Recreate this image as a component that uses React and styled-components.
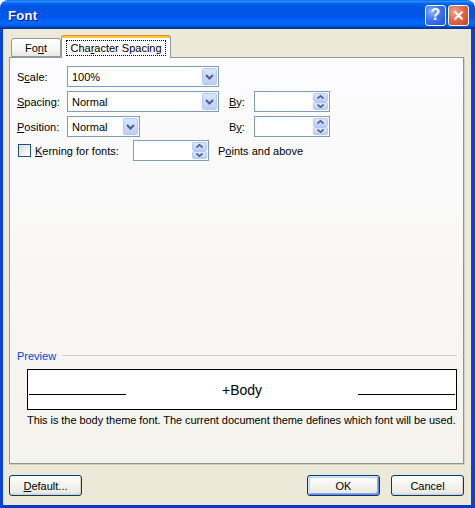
import styled, { createGlobalStyle } from "styled-components";

const GlobalStyle = createGlobalStyle`
  html, body {
    margin: 0;
    padding: 0;
    background: #ffffff;
  }
  body {
    font-family: "Liberation Sans", Arial, sans-serif;
    font-size: 11px;
    color: #000000;
  }
  * {
    box-sizing: border-box;
  }
`;

const Window = styled.div`
  width: 475px;
  height: 508px;
  display: flex;
  flex-direction: column;
  border-radius: 8px 8px 0 0;
  overflow: hidden;
`;

const TitleBar = styled.div`
  height: 29px;
  flex: none;
  display: flex;
  align-items: center;
  gap: 2px;
  padding: 1px 6px 0 8px;
  background: linear-gradient(
    to bottom,
    #0058ee 0%,
    #3593ff 4%,
    #288eff 6%,
    #127dff 8%,
    #036ffc 10%,
    #0262ee 14%,
    #0057e5 20%,
    #0054e3 24%,
    #0055eb 56%,
    #005bf5 66%,
    #026afe 76%,
    #0062ef 86%,
    #0052d6 92%,
    #0040ab 94%,
    #003092 100%
  );
`;

const Title = styled.div`
  flex: 1;
  color: #ffffff;
  font-weight: bold;
  font-size: 13px;
  letter-spacing: 0.3px;
  text-shadow: 1px 1px #0f1089;
`;

const CaptionButton = styled.div`
  width: 21px;
  height: 21px;
  border: 1px solid #ffffff;
  border-radius: 3px;
  display: flex;
  align-items: center;
  justify-content: center;
  color: #ffffff;
  font-weight: bold;
  font-size: 16px;
  background: ${(p) =>
    p.$close
      ? "radial-gradient(circle at 30% 30%, #f0a58c 0%, #e2694a 45%, #c8401b 100%)"
      : "radial-gradient(circle at 30% 30%, #8fb3fb 0%, #3a74f2 45%, #2250d7 100%)"};
`;

const Frame = styled.div`
  flex: 1;
  display: flex;
  flex-direction: column;
  background: #ece9d8;
  border-left: 3px solid #0842d9;
  border-right: 4px solid #0842d9;
  border-bottom: 3px solid #0838c8;
  padding: 6px 7px 9px 6px;
`;

const TabRow = styled.div`
  display: flex;
  align-items: flex-end;
  height: 22px;
  padding-left: 2px;
  position: relative;
  z-index: 1;
`;

const Tab = styled.div`
  width: ${(p) => p.$width}px;
  height: ${(p) => (p.$active ? 23 : 19)}px;
  margin-bottom: ${(p) => (p.$active ? -1 : 0)}px;
  border: 1px solid #919b9c;
  border-bottom: ${(p) => (p.$active ? "none" : "1px solid #919b9c")};
  border-top: ${(p) => (p.$active ? "1px solid #e68b2c" : "1px solid #919b9c")};
  border-radius: 3px 3px 0 0;
  display: flex;
  align-items: center;
  justify-content: center;
  padding-top: ${(p) => (p.$active ? 2 : 1)}px;
  background: ${(p) =>
    p.$active
      ? "linear-gradient(to bottom, #ffc73c 0, #ffc73c 2px, #fcfcfe 2px, #fcfcfe 100%)"
      : "linear-gradient(to bottom, #ffffff, #f3f3ef 70%, #e9e8e2)"};
`;

const FocusLabel = styled.span`
  outline: 1px dotted #000000;
  outline-offset: 1px;
  padding: 0 2px;
  line-height: 12px;
`;

const Panel = styled.div`
  flex: 1;
  display: flex;
  flex-direction: column;
  border: 1px solid #919b9c;
  border-right-color: #8c9495;
  border-bottom-color: #8c9495;
  background: linear-gradient(to bottom, #fcfcfe, #f4f3ee);
  box-shadow: 1px 1px 0 #d0cebf;
  padding: 8px 6px 36px 7px;
`;

const Grid = styled.div`
  display: grid;
  grid-template-columns: 50px 152px 35px 76px;
  grid-auto-rows: 21px;
  row-gap: 4px;
  align-items: center;
`;

const Label = styled.span`
  white-space: nowrap;
  padding-left: ${(p) => p.$indent || 0}px;
`;

const Field = styled.div`
  height: 21px;
  width: ${(p) => p.$width}px;
  border: 1px solid #7f9db9;
  background: #ffffff;
  display: flex;
  align-items: center;
  padding: 1px;
`;

const FieldValue = styled.span`
  flex: 1;
  padding-left: 3px;
`;

const DropButton = styled.div`
  width: 15px;
  height: 17px;
  border: 1px solid #b4c8f6;
  border-radius: 2px;
  background: linear-gradient(to bottom, #dbe6fe, #bccffb);
  display: flex;
  align-items: center;
  justify-content: center;
`;

const SpinStack = styled.div`
  width: 15px;
  height: 17px;
  display: flex;
  flex-direction: column;
`;

const SpinButton = styled.div`
  flex: 1;
  border: 1px solid #b4c8f6;
  border-radius: 2px;
  background: linear-gradient(to bottom, #dbe6fe, #bccffb);
  display: flex;
  align-items: center;
  justify-content: center;
`;

const KerningRow = styled.div`
  display: flex;
  align-items: center;
  height: 21px;
  margin-top: 3px;
`;

const CheckBox = styled.div`
  width: 13px;
  height: 13px;
  margin-left: 1px;
  border: 1px solid #1c5180;
  background: linear-gradient(135deg, #dcdcd7, #ffffff);
`;

const KerningLabel = styled.span`
  width: 98px;
  margin-left: 4px;
  white-space: nowrap;
`;

const AfterText = styled.span`
  margin-left: 9px;
`;

const PreviewSection = styled.div`
  margin-top: auto;
  display: flex;
  flex-direction: column;
`;

const PreviewHeader = styled.div`
  display: flex;
  align-items: center;
  gap: 6px;
  height: 13px;
  color: #0046d5;
`;

const Rule = styled.div`
  flex: 1;
  height: 1px;
  background: #d0d0bf;
`;

const PreviewBox = styled.div`
  margin: 7px 0 0 10px;
  height: 41px;
  border: 1px solid #000000;
  background: #ffffff;
  display: flex;
  align-items: flex-start;
  padding: 0 1px;
`;

const BaseLine = styled.div`
  width: 97px;
  height: 1px;
  background: #000000;
  margin-top: 24px;
`;

const PreviewText = styled.div`
  flex: 1;
  text-align: center;
  font-size: 14px;
  line-height: 16px;
  margin-top: 12px;
`;

const Description = styled.div`
  margin: 4px 0 0 10px;
  line-height: 13px;
  letter-spacing: -0.06px;
  white-space: nowrap;
`;

const ButtonRow = styled.div`
  display: flex;
  gap: 11px;
  margin-top: 11px;
`;

const Button = styled.div`
  width: 73px;
  height: 21px;
  border: 1px solid #003c74;
  border-radius: 3px;
  display: flex;
  align-items: center;
  justify-content: center;
  margin-right: ${(p) => (p.$push ? "auto" : "0")};
  background: linear-gradient(to bottom, #ffffff, #f4f3ee 50%, #ecebe6 86%, #d6d0c5);
  box-shadow: ${(p) =>
    p.$default
      ? "inset 1px 1px #cee7ff, inset -1px -1px #6982ee, inset 2px 2px #bcd4f6, inset -2px -2px #89ade4"
      : "inset -1px -1px #d6d0c5"};
`;

function Chevron({ up }) {
  return (
    <svg width="9" height="6" viewBox="0 0 9 6">
      <polyline
        points={up ? "1,5 4.5,1.5 8,5" : "1,1 4.5,4.5 8,1"}
        fill="none"
        stroke="#4d6185"
        strokeWidth="2"
      />
    </svg>
  );
}

function SmallArrow({ up }) {
  return (
    <svg width="7" height="4" viewBox="0 0 7 4">
      <polyline
        points={up ? "0.5,3.5 3.5,0.8 6.5,3.5" : "0.5,0.5 3.5,3.2 6.5,0.5"}
        fill="none"
        stroke="#4d6185"
        strokeWidth="1.6"
      />
    </svg>
  );
}

function Combo({ width, value }) {
  return (
    <Field $width={width}>
      <FieldValue>{value}</FieldValue>
      <DropButton>
        <Chevron />
      </DropButton>
    </Field>
  );
}

function Spin() {
  return (
    <Field $width={76}>
      <FieldValue />
      <SpinStack>
        <SpinButton>
          <SmallArrow up />
        </SpinButton>
        <SpinButton>
          <SmallArrow />
        </SpinButton>
      </SpinStack>
    </Field>
  );
}

export default function App() {
  return (
    <>
      <GlobalStyle />
      <Window>
        <TitleBar>
          <Title>Font</Title>
          <CaptionButton>?</CaptionButton>
          <CaptionButton $close>
            <svg width="11" height="11" viewBox="0 0 11 11">
              <path d="M1.5 1.5 L9.5 9.5 M9.5 1.5 L1.5 9.5" stroke="#ffffff" strokeWidth="2.2" />
            </svg>
          </CaptionButton>
        </TitleBar>
        <Frame>
          <TabRow>
            <Tab $width={50}>
              Fo<u>n</u>t
            </Tab>
            <Tab $width={110} $active>
              <FocusLabel>
                Cha<u>r</u>acter Spacing
              </FocusLabel>
            </Tab>
          </TabRow>
          <Panel>
            <Grid>
              <Label>
                S<u>c</u>ale:
              </Label>
              <Combo width={152} value="100%" />
              <span />
              <span />

              <Label>
                <u>S</u>pacing:
              </Label>
              <Combo width={152} value="Normal" />
              <Label $indent={10}>
                <u>B</u>y:
              </Label>
              <Spin />

              <Label>
                <u>P</u>osition:
              </Label>
              <Combo width={73} value="Normal" />
              <Label $indent={10}>
                B<u>y</u>:
              </Label>
              <Spin />
            </Grid>
            <KerningRow>
              <CheckBox />
              <KerningLabel>
                <u>K</u>erning for fonts:
              </KerningLabel>
              <Spin />
              <AfterText>
                P<u>o</u>ints and above
              </AfterText>
            </KerningRow>
            <PreviewSection>
              <PreviewHeader>
                Preview
                <Rule />
              </PreviewHeader>
              <PreviewBox>
                <BaseLine />
                <PreviewText>+Body</PreviewText>
                <BaseLine />
              </PreviewBox>
              <Description>
                This is the body theme font. The current document theme defines which font will be used.
              </Description>
            </PreviewSection>
          </Panel>
          <ButtonRow>
            <Button $push>
              <span>
                <u>D</u>efault...
              </span>
            </Button>
            <Button $default>OK</Button>
            <Button>Cancel</Button>
          </ButtonRow>
        </Frame>
      </Window>
    </>
  );
}
